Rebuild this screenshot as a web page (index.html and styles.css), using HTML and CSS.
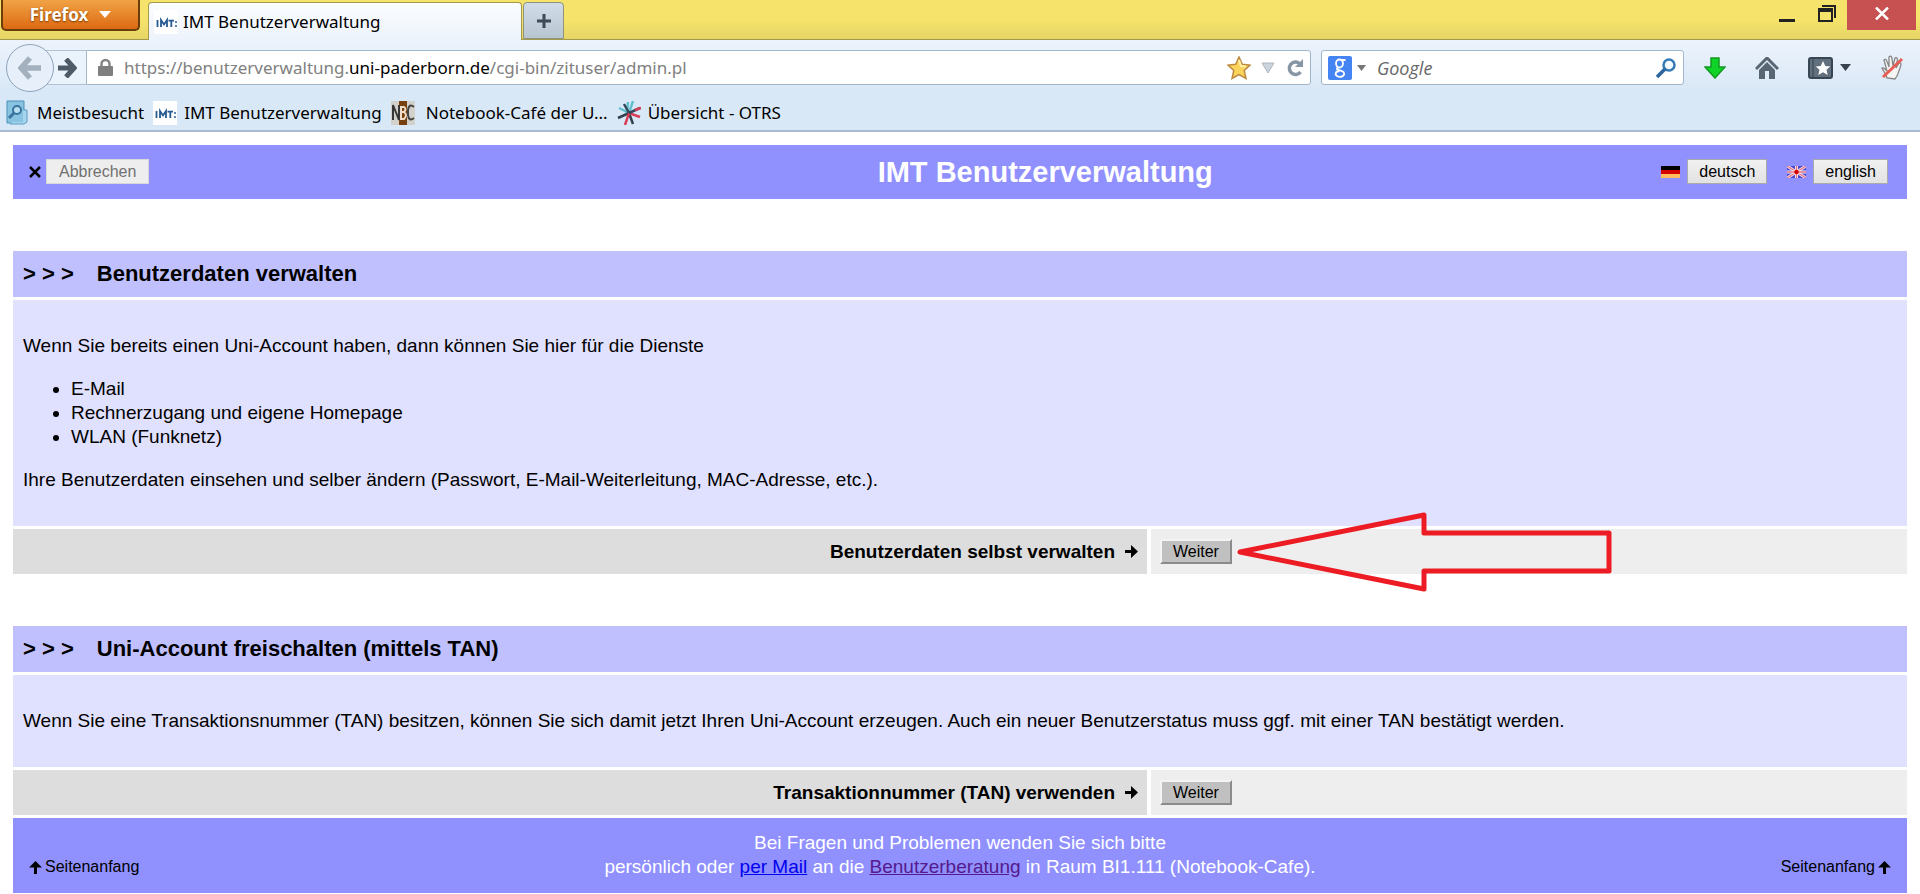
FILE: index.html
```html
<!DOCTYPE html>
<html lang="de">
<head>
<meta charset="utf-8">
<title>IMT Benutzerverwaltung</title>
<link rel="stylesheet" href="styles.css">
</head>
<body>
<svg class="defs" aria-hidden="true">
  <symbol id="imt" viewBox="0 0 24 24"><rect width="24" height="24" fill="#fff"/><path d="M3.500 10v7M7 17v-7l3 4.500 3-4.500v7M14.500 10.700h5.500M17.300 10.500v6.500" fill="none" stroke="#265b91" stroke-width="1.800"/><path d="M21 11h2v2h-2zM21 15h2v2h-2z" fill="#5d87b0"/></symbol>
  <symbol id="right" viewBox="0 0 13 13"><path d="M0 5h6V0l7 6.500L6 13V8H0z"/></symbol>
  <symbol id="up" viewBox="0 0 13 13"><path d="M6.500 0L13 6.500H8V13H5V6.500H0z"/></symbol>
</svg>

<header class="browser">
  <div class="titlebar">
    <button class="menu">Firefox <svg width="12" height="8" viewBox="0 0 12 8"><path d="M0 0h12L6 7z" fill="#fff"/></svg></button>
    <div class="tab"><svg class="favicon"><use href="#imt"/></svg><span>IMT Benutzerverwaltung</span></div>
    <button class="newtab" aria-label="Neuer Tab"><svg width="16" height="16" viewBox="0 0 16 16"><path d="M8 1v14M1 8h14" stroke="#3f4a54" stroke-width="3"/></svg></button>
    <div class="window">
      <button aria-label="Minimieren"><svg width="18" height="18" viewBox="0 0 18 18"><path d="M1 14h16v3H1z" fill="#222"/></svg></button>
      <button aria-label="Wiederherstellen"><svg width="18" height="18" viewBox="0 0 18 18"><path d="M4 1h13v12" fill="none" stroke="#222" stroke-width="2"/><path d="M0 3h15v14H0zM2 7v8h11V7z" fill="#222" fill-rule="evenodd"/></svg></button>
      <button class="close" aria-label="Schließen"><svg width="14" height="13" viewBox="0 0 14 13"><path d="M1 0.500l12 12M13 0.500l-12 12" stroke="#fff" stroke-width="2.500"/></svg></button>
    </div>
  </div>

  <div class="navbar">
    <button class="back" aria-label="Zurück"><svg width="24" height="24" viewBox="0 0 24 24"><path d="M12 2L3 12l9 10M3 12h20" fill="none" stroke="#a3b0bd" stroke-width="5.500"/></svg></button>
    <button class="forward" aria-label="Vor"><svg width="20" height="20" viewBox="0 0 20 20"><path d="M9 1l8 9-8 9M17 10H1" fill="none" stroke="#4d5a67" stroke-width="5"/></svg></button>
    <div class="address">
      <svg width="15" height="19" viewBox="0 0 15 19"><path d="M3.500 9V6a4 4 0 0 1 8 0v3" fill="none" stroke="#858585" stroke-width="2.500"/><rect y="8" width="15" height="10" rx="1" fill="#7f7f7f"/></svg>
      <div class="url" role="textbox" aria-label="Adresse" contenteditable="true" spellcheck="false">https://benutzerverwaltung.<span>uni-paderborn.de</span>/cgi-bin/zituser/admin.pl</div>
      <svg class="star" width="24" height="24" viewBox="0 0 24 24"><path d="M12 1l3.300 7.300 7.700.8-5.800 5.300L19 22.500l-7-4-7 4 1.800-8.100L1 9.100l7.700-.8z" fill="#fbd45c" stroke="#bd8a41" stroke-width="1.500"/><path d="M12 4l2 6 5 .5" fill="none" stroke="#fff0a8" stroke-width="2"/></svg>
      <svg class="drop" width="14" height="12" viewBox="0 0 14 12"><path d="M1 1h12L7 11z" fill="#cbd3dc" stroke="#abb6c2"/></svg>
      <svg width="18" height="18" viewBox="0 0 18 18"><path d="M13.500 4.500A6.200 6.200 0 1 0 14.500 13" fill="none" stroke="#8796a5" stroke-width="3.500"/><path d="M17 0v8H9z" fill="#8796a5"/></svg>
    </div>
    <div class="search">
      <svg width="24" height="24" viewBox="0 0 24 24"><rect width="24" height="24" rx="2" fill="#4585f3"/><path d="M17.500 4h-3.500M15 7.500a3.500 4 0 1 1-7 0 3.500 4 0 1 1 7 0M10 11.500c-4 3 4 2.500 5.500 4.500 2.500 4-3 5.500-5.500 4.500-4-1.500-2.500-5.500 1.500-5.500" fill="none" stroke="#fff" stroke-width="1.800"/></svg>
      <svg class="engine" width="9" height="6" viewBox="0 0 9 6"><path d="M0 0h9L4.500 6z" fill="#777"/></svg>
      <input type="text" placeholder="Google" aria-label="Suche">
      <svg width="22" height="22" viewBox="0 0 22 22"><circle cx="14" cy="8" r="5.500" fill="#f5fbff" stroke="#357ab5" stroke-width="2.500"/><path d="M10 12l-8 8" stroke="#2d65a0" stroke-width="3.500"/></svg>
    </div>
    <div class="tools">
      <button aria-label="Downloads"><svg width="22" height="22" viewBox="0 0 22 22"><path d="M7 1h8v9h6L11 21 1 10h6z" fill="#0fd326" stroke="#129b20" stroke-width="1.500"/></svg></button>
      <button aria-label="Startseite"><svg width="24" height="22" viewBox="0 0 24 22"><path d="M1 12L12 1l11 11" fill="none" stroke="#586573" stroke-width="3"/><path d="M4 13l8-8 8 8v9h-6v-8h-4v8H4z" fill="#586573"/></svg></button>
      <button aria-label="Lesezeichen"><svg width="43" height="22" viewBox="0 0 43 22"><rect x="1" y="1" width="23" height="20" rx="2" fill="#62707e" stroke="#384653" stroke-width="2"/><path d="M5 1v20" stroke="#34414e"/><path d="M15 4l2.300 5 5 .5-3.800 3.300 1.200 5.200-4.700-2.700-4.700 2.700 1.200-5.200L7.700 9.500l5-.5z" fill="#fff"/><path d="M32 7h11l-5.500 7z" fill="#38424c"/></svg></button>
      <button aria-label="Skripte blockiert"><svg width="24" height="25" viewBox="0 0 24 25"><path d="M7 23c-1-5-4-7-5-10 2-1 3 1 5 3L4 5c2-2 3 1 5 7V2c2-2 3 0 3 2l1 7 2-8c2-1 3 1 2 4l-1 6 3-5c3-1 2 2 1 5-2 5-2 8-5 11z" fill="#f5f5f3" stroke="#858585" stroke-width="1.300"/><path d="M3 22L22 4" stroke="#e85c56" stroke-width="3"/></svg></button>
    </div>
  </div>

  <nav class="bookmarks">
    <a href="#"><svg width="24" height="26" viewBox="0 0 24 26"><path d="M1 1h17v22H1z" fill="#84bedf" stroke="#4b91b8"/><path d="M18 10h3v12l-3 2H4" fill="#a8d5ed" stroke="#599bc0"/><path d="M2 2h15v20H2z" fill="#88c3e2"/><circle cx="11" cy="10" r="4" fill="#b9def0" stroke="#39749e" stroke-width="2"/><path d="M8 13l-5 5" stroke="#39749e" stroke-width="3"/></svg><span>Meistbesucht</span></a>
    <a href="#"><svg class="favicon"><use href="#imt"/></svg><span>IMT Benutzerverwaltung</span></a>
    <a href="#" class="nbc"><svg width="24" height="24" viewBox="0 0 24 24"><path fill="#d3d1cc" d="M0 0h24v24H0z"/><path fill="#77410f" d="M8 0h8v24H8z"/><path d="M2 19V4l6 15V4" fill="none" stroke="#383838" stroke-width="2"/><path d="M10 6h3q3 2 0 5h-3zm0 5h3q4 3 0 7h-3z" fill="none" stroke="#f0ddca" stroke-width="2"/><path d="M23 6q-5-4-6 3v5q1 7 6 3" fill="none" stroke="#444" stroke-width="2"/></svg><span>Notebook-Café der U...</span></a>
    <a href="#"><svg width="24" height="24" viewBox="0 0 24 24" fill="none" stroke-width="2.500"><path d="M2 7l10 5 4-12M10 12l1-11" stroke="#62c0ce"/><path d="M1 17l11-5 4 11" stroke="#31414f"/><path d="M23 16l-11-4-4 12" stroke="#d83c57"/><path d="M12 12l11-5M7 3l5 9" stroke="#34495a"/><path d="M18 9l6-2" stroke="#d83c57"/></svg><span>Übersicht - OTRS</span></a>
  </nav>
</header>

<main class="page" id="top">
  <div class="banner">
    <div class="cancel"><svg width="12" height="12" viewBox="0 0 12 12"><path d="M1 1l10 10M11 1L1 11" stroke="#000" stroke-width="2.500"/></svg><button class="plain" disabled>Abbrechen</button></div>
    <h1>IMT Benutzerverwaltung</h1>
    <div class="languages">
      <div><svg width="19" height="12" viewBox="0 0 19 12"><path d="M0 0h19v4H0z"/><path fill="#d40000" d="M0 4h19v4H0z"/><path fill="#ffbd60" d="M0 8h19v4H0z"/></svg><button class="plain">deutsch</button></div>
      <div><svg width="19" height="12" viewBox="0 0 19 12"><path fill="#4548cf" d="M0 0h19v12H0z"/><path d="M0 0l19 12M19 0L0 12" stroke="#f4cddd" stroke-width="3"/><path d="M0 0l19 12M19 0L0 12" stroke="#de6878"/><path d="M9.500 0v12M0 6h19" stroke="#fff" stroke-width="3"/><path d="M9.500 0v12M0 6h19" stroke="#e07080" stroke-width="1.500"/><circle cx="9.500" cy="6" r="2.200" fill="#d40000"/></svg><button class="plain">english</button></div>
    </div>
  </div>

  <section class="panel">
    <h2><span>&gt; &gt; &gt;</span>Benutzerdaten verwalten</h2>
    <div class="info">
      <p>Wenn Sie bereits einen Uni-Account haben, dann können Sie hier für die Dienste</p>
      <ul>
        <li>E-Mail</li>
        <li>Rechnerzugang und eigene Homepage</li>
        <li>WLAN (Funknetz)</li>
      </ul>
      <p>Ihre Benutzerdaten einsehen und selber ändern (Passwort, E-Mail-Weiterleitung, MAC-Adresse, etc.).</p>
    </div>
    <div class="action">
      <div class="label"><span id="manage">Benutzerdaten selbst verwalten</span><svg width="13" height="13"><use href="#right"/></svg></div>
      <div class="control">
        <button class="next" aria-describedby="manage">Weiter</button>
        <svg class="pointer" width="378" height="82" viewBox="0 0 378 82" aria-hidden="true"><path d="M4 41L188 4v18h185v38H188v18z" fill="none" stroke="#ed1c24" stroke-width="5" stroke-linejoin="round"/></svg>
      </div>
    </div>
  </section>

  <section class="panel">
    <h2><span>&gt; &gt; &gt;</span>Uni-Account freischalten (mittels TAN)</h2>
    <div class="info">
      <p>Wenn Sie eine Transaktionsnummer (TAN) besitzen, können Sie sich damit jetzt Ihren Uni-Account erzeugen. Auch ein neuer Benutzerstatus muss ggf. mit einer TAN bestätigt werden.</p>
    </div>
    <div class="action">
      <div class="label"><span id="tan">Transaktionnummer (TAN) verwenden</span><svg width="13" height="13"><use href="#right"/></svg></div>
      <div class="control"><button class="next" aria-describedby="tan">Weiter</button></div>
    </div>
  </section>

  <footer class="foot">
    <a class="totop" href="#top"><svg width="13" height="13"><use href="#up"/></svg>Seitenanfang</a>
    <p>Bei Fragen und Problemen wenden Sie sich bitte<br>persönlich oder <a href="#">per Mail</a> an die <a href="#" class="seen">Benutzerberatung</a> in Raum BI1.111 (Notebook-Cafe).</p>
    <a class="totop" href="#top">Seitenanfang<svg width="13" height="13"><use href="#up"/></svg></a>
  </footer>
</main>
</body>
</html>
```
FILE: styles.css
```css
* { box-sizing: border-box; }
body { margin: 0; background: #fff; color: #000; font: 19px/24px "Liberation Sans", Arial, sans-serif; }
button { padding: 0; border: 0; background: none; font: inherit; }
svg { display: block; flex: none; }
.defs { position: absolute; width: 0; height: 0; }
.favicon { width: 24px; height: 24px; }

/* Browser frame */
.browser { font: 17px/24px "Noto Sans", "Open Sans", sans-serif; background: linear-gradient(#edf3fc 40px, #d9e8f7 90px); border-bottom: 2px solid #a8bbd0; }
.titlebar { display: flex; align-items: flex-start; height: 40px; padding-left: 1px; background: linear-gradient(#f6e36b 50%, #e6d566); border-bottom: 1px solid #a39a4a; }
.menu { display: flex; align-items: center; justify-content: center; gap: 11px; width: 139px; height: 31px; color: #fff; font-weight: 700; text-shadow: 0 1px 2px #7a3a00; background: linear-gradient(#f0a345, #dd6a12); border: 2px solid #6b3d0d; border-top: 0; border-radius: 0 0 5px 5px; }
.tab { display: flex; align-items: center; gap: 5px; width: 374px; height: 38px; margin: 2px 1px 0 8px; padding: 0 5px; background: linear-gradient(#fbfdff, #edf3fc); border: 1px solid #a39a4a; border-bottom: 0; border-radius: 4px 4px 0 0; }
.newtab { display: grid; place-items: center; width: 41px; height: 37px; margin-top: 2px; background: linear-gradient(#d1dce8, #b8c6d2); border: 1px solid #8d967d; border-radius: 4px 4px 0 0; }
.window { display: flex; margin: 0 4px 0 auto; }
.window button { display: grid; place-items: center; width: 40px; height: 30px; padding-bottom: 2px; }
.window .close { width: 69px; background: #c75050; padding-bottom: 4px; }

.navbar { display: flex; align-items: center; height: 55px; padding: 0 16px 0 6px; }
.back { display: grid; place-items: center; z-index: 1; width: 48px; height: 48px; border: 1px solid #8ea4bb; border-radius: 50%; background: #e7f0fa; }
.forward { display: grid; place-items: center; width: 40px; height: 35px; margin-left: -8px; padding-left: 2px; border: 1px solid #b0c3d5; border-width: 1px 0; background: #eaf2fb; }
.address, .search { display: flex; align-items: center; height: 35px; background: #fff; border: 1px solid #a0b6cb; border-radius: 0 3px 3px 0; }
.address { flex: 1; padding: 0 6px 0 11px; }
.url { flex: 1; margin-left: 11px; color: #808080; white-space: nowrap; outline: 0; }
.url span { color: #000; }
.drop { margin: 0 11px 0 10px; }
.search { width: 363px; margin-left: 10px; padding: 0 6px; border-radius: 3px; }
.engine { margin-left: 5px; }
.search input { flex: 1; min-width: 0; margin-left: 11px; padding: 0; border: 0; outline: 0; background: none; font: italic 18px/24px "Open Sans", "Noto Sans", sans-serif; }
.search input::placeholder { color: #666; opacity: 1; }
.tools { display: flex; align-items: center; gap: 29px; margin-left: 20px; }

.bookmarks { display: flex; gap: 9px; height: 35px; padding: 0 6px; }
.bookmarks a { display: flex; align-items: center; gap: 7px; color: #000; text-decoration: none; }
.bookmarks .nbc { gap: 11px; }

/* Page content */
.page { padding: 13px 13px 0; }
.banner { display: grid; grid-template-columns: 26% 1fr 17%; align-items: center; height: 54px; padding-bottom: 1px; background: #9090ff; }
.banner h1 { margin: 0; color: #fff; font-size: 29px; line-height: 32px; text-align: center; }
.cancel { display: flex; align-items: center; gap: 5px; padding-left: 16px; }
.languages { display: flex; justify-content: flex-end; gap: 20px; padding-right: 19px; }
.languages div { display: flex; align-items: center; gap: 7px; }
.languages .plain { padding: 0 11px; }
.plain { padding: 0 12px; font-size: 16px; line-height: 23px; background: linear-gradient(#f1f1f1, #e2e2e2); border: 1px solid #aaa; color: #000; }
.plain:disabled { background: #eee; border-color: #d8d8d8; color: #707070; }

.panel { display: grid; gap: 3px; margin-top: 52px; }
.panel h2 { margin: 0; padding: 10px; background: #c0c0ff; font-size: 22px; line-height: 26px; }
.panel h2 span { margin-right: 23px; }
.info { padding: 34px 10px; background: #e0e0ff; }
.info p { margin: 0; }
.info ul { margin: 19px 0; padding-left: 48px; }
.action { display: grid; grid-template-columns: 3fr 2fr; gap: 4px; height: 45px; }
.label { display: flex; align-items: center; justify-content: flex-end; gap: 10px; padding-right: 9px; background: #ddd; font-weight: 700; }
.control { display: flex; align-items: center; position: relative; padding-left: 9px; background: #eee; }
.next { padding: 0 11px; font-size: 16px; line-height: 21px; background: #c0c0c0; border: 2px solid; border-color: #f4f4f4 #8b8b8b #8b8b8b #f4f4f4; color: #000; }
.pointer { position: absolute; left: 85px; top: -18px; }

.foot { display: grid; grid-template-columns: 1fr auto 1fr; align-items: end; margin-top: 3px; padding: 13px 16px 14px; background: #9090ff; color: #fff; }
.foot p { margin: 0; text-align: center; }
.foot p a { color: #00e; }
.foot p .seen { color: #551a8b; }
.totop { display: flex; align-items: center; gap: 3px; color: #000; font-size: 16px; text-decoration: none; }
.totop:last-child { justify-content: flex-end; }
```
